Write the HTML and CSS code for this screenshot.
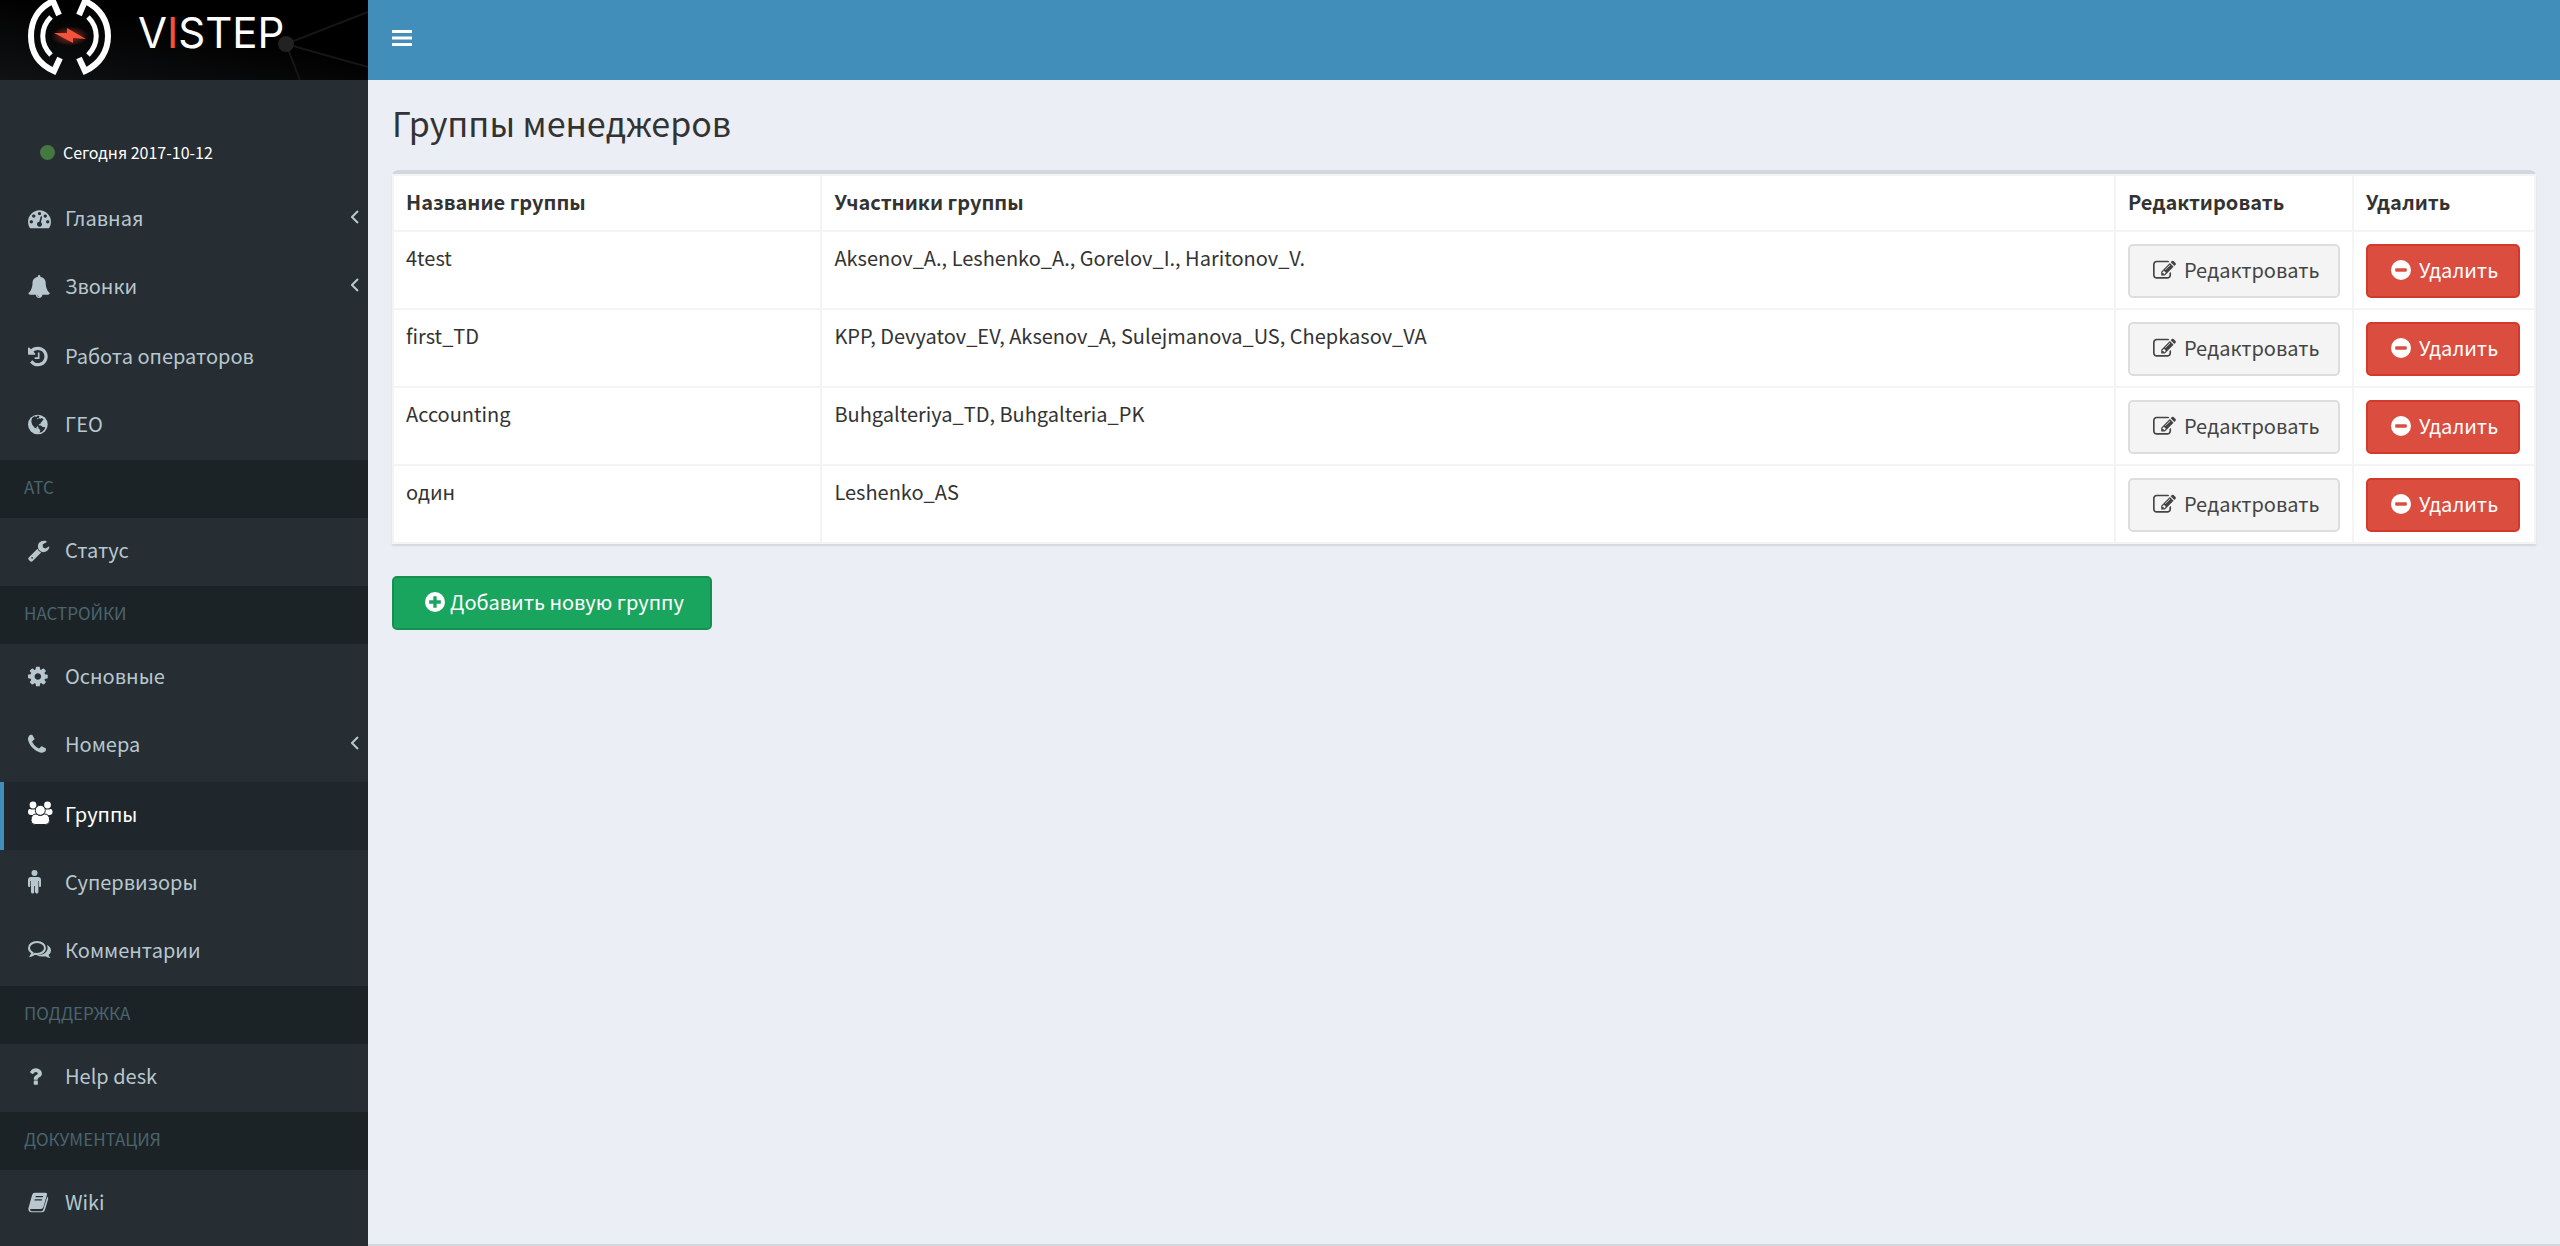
FILE: index.html
```
<!DOCTYPE html>
<html lang="ru">
<head>
  <meta charset="UTF-8">
  <meta name="viewport" content="width=device-width, initial-scale=1.0">
  <title>Группы менеджеров</title>
  <link rel="stylesheet" href="styles.css">
</head>
<body>
  <svg class="sprite" aria-hidden="true">
    <symbol id="icon-edit" viewBox="0 0 1792 1792">
      <path d="M888 1184l116-116-152-152-116 116v56h96v96h56zm440-720q-16-16-33 1l-350 350q-17 17-1 33t33-1l350-350q17-17 1-33zm80 594v190q0 119-84.5 203.5t-203.5 84.5h-832q-119 0-203.5-84.5t-84.5-203.5v-832q0-119 84.5-203.5t203.5-84.5h832q63 0 117 25 15 7 18 23 3 17-9 29l-49 49q-14 14-32 8-23-6-45-6h-832q-66 0-113 47t-47 113v832q0 66 47 113t113 47h832q66 0 113-47t47-113v-126q0-13 9-22l64-64q15-15 35-7t20 29zm-96-738l288 288-672 672h-288v-288zm444 132l-92 92-288-288 92-92q28-28 68-28t68 28l152 152q28 28 28 68t-28 68z"/>
    </symbol>
    <symbol id="icon-minus" viewBox="0 0 24 24">
      <path fill-rule="evenodd" d="M12 0a12 12 0 1 1 0 24a12 12 0 0 1 0-24zM6 10a1 1 0 0 0-1 1v2a1 1 0 0 0 1 1h12a1 1 0 0 0 1-1v-2a1 1 0 0 0-1-1z"/>
    </symbol>
    <symbol id="icon-angle" viewBox="0 0 8 14">
      <path d="M7 1L1 7l6 6" fill="none" stroke="currentColor" stroke-width="2"/>
    </symbol>
  </svg>

  <div class="wrapper">
    <aside class="sidebar">
      <a href="#" class="logo">
        <svg class="logo-mark" viewBox="0 0 368 80" preserveAspectRatio="xMinYMin slice" aria-hidden="true">
          <defs>
            <radialGradient id="glow">
              <stop offset="0" stop-color="#f4523b" stop-opacity=".6"/>
              <stop offset="1" stop-color="#f4523b" stop-opacity="0"/>
            </radialGradient>
          </defs>
          <g stroke="#161616" stroke-width="2">
            <path d="M286 44L368 12M286 44l82 23M286 44l14 36"/>
          </g>
          <circle cx="286" cy="44" r="8" fill="#222"/>
          <g fill="none" stroke="#fff">
            <path stroke-width="6" d="M59 15L53 1C38 8 31 21 31 36s7 28 23 35l6-13"/>
            <path stroke-width="6" d="M79 15l6-14c15 7 23 20 23 35s-8 28-23 35l-6-13"/>
            <path stroke-width="5" d="M51 17c-11 11-11 27 0 38M88 17c11 11 11 27 0 38"/>
          </g>
          <ellipse cx="70" cy="36" rx="19" ry="10" fill="url(#glow)"/>
          <path fill="#f4523b" d="M54 33h13v-5l19 11-13-1v5z"/>
        </svg>
        <span class="logo-text">V<span class="logo-accent">I</span>STEP</span>
      </a>

      <div class="user-panel"><span class="dot"></span>Сегодня 2017-10-12</div>

      <ul class="menu">
        <li><a href="#">
          <svg class="icon" viewBox="0 0 1792 1792" preserveAspectRatio="xMinYMid"><path d="M384 1152q0-53-37.5-90.5t-90.5-37.5-90.5 37.5-37.5 90.5 37.5 90.5 90.5 37.5 90.5-37.5 37.5-90.5zm192-448q0-53-37.5-90.5t-90.5-37.5-90.5 37.5-37.5 90.5 37.5 90.5 90.5 37.5 90.5-37.5 37.5-90.5zm428 481l101-382q6-26-7.5-48.5t-38.5-29.5-48 6.5-30 39.5l-101 382q-60 5-107 43.5t-63 98.5q-20 77 20 146t117 89 146-20 89-117q16-60-6-117t-72-91zm660-33q0-53-37.5-90.5t-90.5-37.5-90.5 37.5-37.5 90.5 37.5 90.5 90.5 37.5 90.5-37.5 37.5-90.5zm-640-640q0-53-37.5-90.5t-90.5-37.5-90.5 37.5-37.5 90.5 37.5 90.5 90.5 37.5 90.5-37.5 37.5-90.5zm448 192q0-53-37.5-90.5t-90.5-37.5-90.5 37.5-37.5 90.5 37.5 90.5 90.5 37.5 90.5-37.5 37.5-90.5zm320 448q0 261-141 483-19 29-54 29h-1402q-35 0-54-29-141-221-141-483 0-182 71-348t191-286 286-191 348-71 348 71 286 191 191 286 71 348z"/></svg>
          <span>Главная</span><svg class="angle"><use href="#icon-angle"/></svg></a></li>
        <li class="spaced"><a href="#">
          <svg class="icon" viewBox="32 0 1760 1792" preserveAspectRatio="xMinYMid"><path d="M912 1696q0-16-16-16-59 0-101.5-42.5t-42.5-101.5q0-16-16-16t-16 16q0 73 51.5 124.5t124.5 51.5q16 0 16-16zm816-288q0 52-38 90t-90 38h-448q0 106-75 181t-181 75-181-75-75-181h-448q-52 0-90-38t-38-90q50-42 91-88t85-119.5 74.5-158.5 50-206 19.5-260q0-152 117-282.5t307-158.5q-8-19-8-39 0-40 28-68t68-28 68 28 28 68q0 20-8 39 190 28 307 158.5t117 282.5q0 139 19.5 260t50 206 74.5 158.5 85 119.5 91 88z"/></svg>
          <span>Звонки</span><svg class="angle"><use href="#icon-angle"/></svg></a></li>
        <li><a href="#">
          <svg class="icon" viewBox="128 0 1536 1792" preserveAspectRatio="xMinYMid"><path d="M1664 896q0 156-61 298t-164 245-245 164-298 61q-172 0-327-72.5t-264-204.5q-7-10-6.5-22.5t8.5-20.5l137-138q10-9 25-9 16 2 23 12 73 95 179 147t225 52q104 0 198.5-40.5t163.5-109.5 109.5-163.5 40.5-198.5-40.5-198.5-109.5-163.5-163.5-109.5-198.5-40.5q-98 0-188 35.5t-160 101.5l137 138q31 30 14 69-17 40-59 40h-448q-26 0-45-19t-19-45v-448q0-42 40-59 39-17 69 14l130 129q107-101 244.5-156.5t284.5-55.5q156 0 298 61t245 164 164 245 61 298zm-640-288v448q0 14-9 23t-23 9h-320q-14 0-23-9t-9-23v-64q0-14 9-23t23-9h224v-352q0-14 9-23t23-9h64q14 0 23 9t9 23z"/></svg>
          <span>Работа операторов</span></a></li>
        <li><a href="#">
          <svg class="icon" viewBox="0 0 28 28"><circle cx="12" cy="14" r="12"/><path class="cut" d="M5 6l3-2 2 1 2-2 2 1-1 2 2 1 2-1 2 2-2 2-2 3-2 1 1 1-2 1-2 1 1 2-3-1-3-4-1-4zM12 16l3-1 3 2 3 0-1 3-3 3-3 1 1-3-2-2z"/><path d="M11 6l2 0-1 2z"/></svg>
          <span>ГЕО</span></a></li>
        <li class="header">АТС</li>
        <li><a href="#">
          <svg class="icon" viewBox="64 0 1728 1792" preserveAspectRatio="xMinYMid"><path d="M448 1472q0-26-19-45t-45-19-45 19-19 45 19 45 45 19 45-19 19-45zm644-420l-682 682q-37 37-90 37-52 0-91-37l-106-108q-38-36-38-90 0-53 38-91l681-681q39 98 114.5 173.5t173.5 114.5zm634-435q0 39-23 106-47 134-164.5 217.5t-258.5 83.5q-185 0-316.5-131.5t-131.5-316.5 131.5-316.5 316.5-131.5q58 0 121.5 16.5t107.5 46.5q16 11 16 28t-16 28l-293 169v224l193 107q5-3 79-48.5t135.5-81 70.5-35.5q15 0 23.5 10t8.5 25z"/></svg>
          <span>Статус</span></a></li>
        <li class="header">НАСТРОЙКИ</li>
        <li><a href="#">
          <svg class="icon" viewBox="128 0 1536 1792" preserveAspectRatio="xMinYMid"><path d="M1152 896q0-106-75-181t-181-75-181 75-75 181 75 181 181 75 181-75 75-181zm512-109v222q0 12-8 23t-20 13l-185 28q-19 54-39 91 35 50 107 138 10 12 10 25t-9 23q-27 37-99 108t-94 71q-12 0-26-9l-138-108q-44 23-91 38-16 136-29 186-7 28-36 28h-222q-14 0-24.5-8.5t-11.5-21.5l-28-184q-49-16-90-37l-141 107q-10 9-25 9-14 0-25-11-126-114-165-168-7-10-7-23 0-12 8-23 15-21 51-66.5t54-70.5q-27-50-41-99l-183-27q-13-2-21-12.5t-8-23.5v-222q0-12 8-23t19-13l186-28q14-46 39-92-40-57-107-138-10-12-10-24 0-10 9-23 26-36 98.5-107.5t94.5-71.5q13 0 26 10l138 107q44-23 91-38 16-136 29-186 7-28 36-28h222q14 0 24.5 8.5t11.5 21.5l28 184q49 16 90 37l142-107q9-9 24-9 13 0 25 10 129 119 165 170 7 8 7 22 0 12-8 23-15 21-51 66.5t-54 70.5q26 50 41 98l183 28q13 2 21 12.5t8 23.5z"/></svg>
          <span>Основные</span></a></li>
        <li class="spaced"><a href="#">
          <svg class="icon" viewBox="192 0 1408 1792" preserveAspectRatio="xMinYMid"><path d="M1600 1240q0 27-10 70.5t-21 68.5q-21 50-122 106-94 51-186 51-27 0-53-3.5t-57.5-12.5-47-14.5-55.5-20.5-49-18q-98-35-175-83-127-79-264-216t-216-264q-48-77-83-175-3-9-18-49t-20.5-55.5-14.5-47-12.5-57.5-3.5-53q0-92 51-186 56-101 106-122 25-11 68.5-21t70.5-10q14 0 21 3 18 6 53 76 11 19 30 54t35 63.5 31 53.5q3 4 17.5 25t21.5 35.5 7 28.5q0 20-28.5 50t-62 55-62 53-28.5 46q0 9 5 22.5t8.5 20.5 14 24 11.5 19q76 137 174 235t235 174q2 1 19 11.5t24 14 20.5 8.5 22.5 5q18 0 46-28.5t53-62 55-62 50-28.5q14 0 28.5 7t35.5 21.5 25 17.5q25 15 53.5 31t63.5 35 54 30q70 35 76 53 3 7 3 21z"/></svg>
          <span>Номера</span><svg class="angle"><use href="#icon-angle"/></svg></a></li>
        <li class="active"><a href="#">
          <svg class="icon icon-lg" viewBox="0 0 28 28"><circle cx="5" cy="5" r="3.4"/><circle cx="19.5" cy="5" r="3.4"/><path d="M2 9q3 1 5.500 0l1 6H3q-3 0-3-3 0-3 2-3zM22.500 9q-3 1-5.500 0l-1 6h5.500q3 0 3-3 0-3-2-3z"/><path class="ring" d="M8 14q4 3 8.600 0 5 0 5 6.500 0 4-4 4H7q-4 0-4-4Q3 14 8 14z"/><circle class="ring" cx="12.300" cy="10.300" r="5"/></svg>
          <span>Группы</span></a></li>
        <li><a href="#">
          <svg class="icon icon-lg" viewBox="0 0 28 28"><circle cx="6.500" cy="5" r="3"/><path d="M3 9h7q3 0 3 3v6q0 1-1 1t-1-1v-5h-.6v11q0 1.500-1.500 1.500T7 24v-6h-.8v6q0 1.500-1.500 1.500T3 24V13h-.7v5q0 1-1.100 1T0 18v-6q0-3 3-3z"/></svg>
          <span>Супервизоры</span></a></li>
        <li><a href="#">
          <svg class="icon icon-lg" viewBox="0 0 28 28"><path fill="none" stroke="currentColor" stroke-width="2" d="M9 6c5 0 8 3 8 6s-3 6-8 6l-2-.2q-2 1.500-4 2l1.500-3Q1 15 1 12c0-3 3-6 8-6z"/><path d="M19 9q4 2 4 5.500 0 3-2.500 4.500 .5 1.500 2 3-3-.2-5-1.800-5 1-9-1.200 9 .3 11-5.500 .5-2-.5-4.500z"/></svg>
          <span>Комментарии</span></a></li>
        <li class="header">ПОДДЕРЖКА</li>
        <li><a href="#">
          <svg class="icon" viewBox="320 0 1216 1792" preserveAspectRatio="xMinYMid"><path d="M1088 1256v240q0 16-12 28t-28 12h-240q-16 0-28-12t-12-28v-240q0-16 12-28t28-12h240q16 0 28 12t12 28zm316-600q0 54-15.5 101t-35 76.500-55 59.500-57.500 43.500-61 35.500q-41 23-68.500 65t-27.500 67q0 17-12 32.500t-28 15.500h-240q-15 0-25.500-18.500t-10.500-37.500v-45q0-83 65-156.500t143-108.500q59-27 84-56t25-76q0-42-46.500-74t-107.500-32q-65 0-108 29-35 25-107 115-13 16-31 16-12 0-25-8l-164-125q-13-10-15.500-25t5.500-28q160-266 464-266 80 0 161 31t146 83 106 127.500 41 158.500z"/></svg>
          <span>Help desk</span></a></li>
        <li class="header">ДОКУМЕНТАЦИЯ</li>
        <li><a href="#">
          <svg class="icon" viewBox="0 0 28 28"><path fill-rule="evenodd" d="M8 2h13q3 0 2 3l-4 14q-1 3-3 3H4q-2 0-1.500 1.500 .5 1 2 1h12q1.500 0 2-2L23.500 7q1.500 1 1 3l-4 13.500q-1 2.500-3.500 2.500H4.500Q0 26 .5 21L5 5q.8-3 3-3zM9.500 6L9 7.500h9L18.500 6zM8.300 10l-.5 1.500h9l.5-1.500z"/></svg>
          <span>Wiki</span></a></li>
      </ul>
    </aside>

    <div class="page">
      <header class="navbar">
        <button type="button" class="toggle" aria-label="Меню">
          <svg viewBox="0 0 20 16"><path d="M0 0h20v3H0zM0 6.500h20v3H0zM0 13h20v3H0z"/></svg>
        </button>
      </header>

      <main class="content">
        <h1>Группы менеджеров</h1>

        <div class="box">
          <table>
            <thead>
              <tr>
                <th class="col-name">Название группы</th>
                <th>Участники группы</th>
                <th class="col-edit">Редактировать</th>
                <th class="col-delete">Удалить</th>
              </tr>
            </thead>
            <tbody>
              <tr>
                <td>4test</td>
                <td>Aksenov_A., Leshenko_A., Gorelov_I., Haritonov_V.</td>
                <td class="actions"><button type="button" class="btn btn-default"><svg class="btn-icon wide"><use href="#icon-edit"/></svg>Редактровать</button></td>
                <td class="actions"><button type="button" class="btn btn-danger"><svg class="btn-icon"><use href="#icon-minus"/></svg>Удалить</button></td>
              </tr>
              <tr>
                <td>first_TD</td>
                <td>KPP, Devyatov_EV, Aksenov_A, Sulejmanova_US, Chepkasov_VA</td>
                <td class="actions"><button type="button" class="btn btn-default"><svg class="btn-icon wide"><use href="#icon-edit"/></svg>Редактровать</button></td>
                <td class="actions"><button type="button" class="btn btn-danger"><svg class="btn-icon"><use href="#icon-minus"/></svg>Удалить</button></td>
              </tr>
              <tr>
                <td>Accounting</td>
                <td>Buhgalteriya_TD, Buhgalteria_PK</td>
                <td class="actions"><button type="button" class="btn btn-default"><svg class="btn-icon wide"><use href="#icon-edit"/></svg>Редактровать</button></td>
                <td class="actions"><button type="button" class="btn btn-danger"><svg class="btn-icon"><use href="#icon-minus"/></svg>Удалить</button></td>
              </tr>
              <tr>
                <td>один</td>
                <td>Leshenko_AS</td>
                <td class="actions"><button type="button" class="btn btn-default"><svg class="btn-icon wide"><use href="#icon-edit"/></svg>Редактровать</button></td>
                <td class="actions"><button type="button" class="btn btn-danger"><svg class="btn-icon"><use href="#icon-minus"/></svg>Удалить</button></td>
              </tr>
            </tbody>
          </table>
        </div>

        <button type="button" class="btn btn-success">
          <svg class="btn-icon" viewBox="0 0 24 24"><path fill-rule="evenodd" d="M12 0a12 12 0 1 1 0 24a12 12 0 0 1 0-24zM10 5v5H5v4h5v5h4v-5h5v-4h-5V5z"/></svg>Добавить новую группу
        </button>
      </main>

      <footer class="footer"></footer>
    </div>
  </div>
</body>
</html>
```
FILE: styles.css
```
* {
  box-sizing: border-box;
}
body {
  margin: 0;
  background: #ebeef4;
  color: #333;
  font-family: "Noto Sans CJK SC", "Noto Sans", sans-serif;
  font-size: 20px;
  line-height: 40px;
}
svg {
  fill: currentColor;
  flex: none;
}
.sprite {
  display: none;
}
.wrapper {
  display: flex;
  min-height: 100vh;
}

/* sidebar */
.sidebar {
  width: 368px;
  flex: none;
  background: #262d33;
}
.logo {
  display: grid;
  height: 80px;
  overflow: hidden;
  background: linear-gradient(10deg, #101213, #000 60%);
  color: #fff;
  text-decoration: none;
}
.logo-mark,
.logo-text {
  grid-area: 1 / 1;
}
.logo-mark {
  width: 368px;
  height: 80px;
}
.logo-text {
  padding: 13px 0 0 138px;
  font-family: Inter, sans-serif;
  font-size: 42px;
}
.logo-accent {
  color: #f4523b;
}
.user-panel {
  display: flex;
  align-items: center;
  height: 106px;
  padding: 38px 0 0 40px;
  color: #fff;
  font-size: 16px;
}
.dot {
  width: 15px;
  height: 15px;
  margin-right: 8px;
  border-radius: 50%;
  background: #437840;
}
.menu {
  margin: 0;
  padding: 0;
  list-style: none;
}
.menu a {
  display: flex;
  align-items: center;
  height: 68px;
  padding: 0 8px 4px 24px;
  border-left: 4px solid transparent;
  color: #b8c7ce;
  text-decoration: none;
}
.menu .spaced {
  margin-bottom: 2px;
}
.menu .active a {
  border-left-color: #418ebb;
  background: #20272c;
  color: #fff;
}
.menu .header {
  height: 58px;
  padding: 7px 24px;
  background: #1c2326;
  color: #4b646f;
  font-size: 17px;
}
.icon {
  width: 23px;
  height: 23px;
  margin-right: 14px;
}
.icon-lg {
  width: 28px;
  height: 28px;
  margin-right: 9px;
}
.cut {
  fill: #262d33;
}
.ring {
  stroke: #20272c;
}
.angle {
  width: 8px;
  height: 14px;
  margin: 0 1px 2px auto;
}

/* top bar */
.page {
  display: flex;
  flex: 1;
  flex-direction: column;
  min-width: 0;
}
.navbar {
  height: 80px;
  background: #418ebb;
}
.toggle {
  height: 76px;
  padding: 0 24px;
  border: 0;
  background: none;
  color: #fff;
  cursor: pointer;
}
.toggle svg {
  display: block;
  width: 20px;
  height: 16px;
}

/* content */
.content {
  flex: 1;
  padding: 18px 24px;
}
h1 {
  margin: 0 0 22px;
  font-size: 34px;
  font-weight: 400;
  line-height: 50px;
}
.box {
  margin-bottom: 32px;
  border-top: 4px solid #d2d6de;
  border-radius: 6px 6px 0 0;
  background: #fff;
  box-shadow: 0 2px 2px rgba(0, 0, 0, 0.1);
}
table {
  width: 100%;
  border-collapse: collapse;
  table-layout: fixed;
}
th,
td {
  padding: 6px 12px 8px;
  border: 2px solid #f4f4f4;
  text-align: left;
  vertical-align: top;
}
.col-name {
  width: 20%;
}
.col-edit {
  width: 238px;
}
.col-delete {
  width: 182px;
}
td.actions {
  padding: 12px 12px 10px;
}
td.actions:last-child {
  padding-right: 14px;
}
.btn {
  display: flex;
  align-items: center;
  width: 100%;
  height: 54px;
  padding: 0 20px 2px 24px;
  border: 2px solid;
  border-radius: 5px;
  font: inherit;
  white-space: nowrap;
  cursor: pointer;
}
.btn-default {
  padding-left: 23px;
  border-color: #ddd;
  background: #f4f4f4;
  color: #444;
}
.btn-danger {
  padding-left: 23px;
  border-color: #d33a2c;
  background: #db4d3f;
  color: #fff;
}
.btn-success {
  width: 320px;
  padding-left: 31px;
  border-color: #178f50;
  background: #1aa55e;
  color: #fff;
}
.btn-icon {
  width: 20px;
  height: 20px;
  margin-right: 8px;
}
.btn-icon.wide {
  width: 23px;
  height: 23px;
}
.btn-success .btn-icon {
  margin-right: 5px;
}
.footer {
  height: 2px;
  background: #d2d6de;
}
```
